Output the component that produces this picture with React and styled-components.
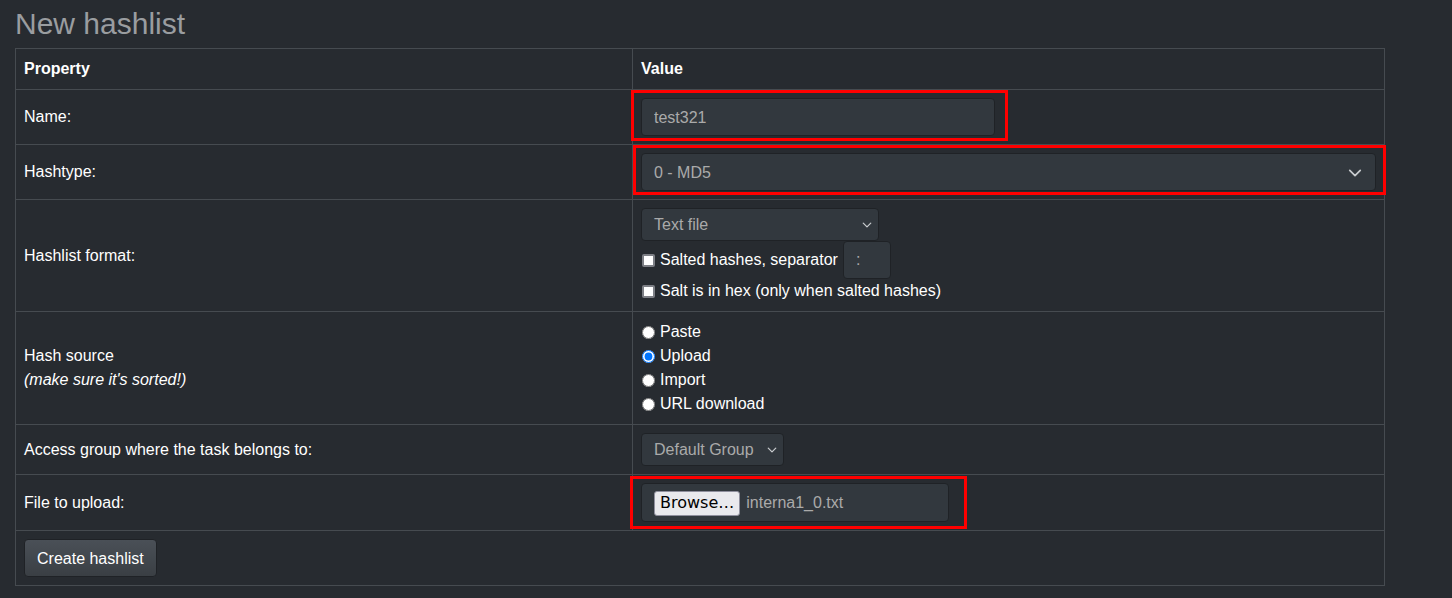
import React from "react";
import styled, { createGlobalStyle } from "styled-components";

// css
const GlobalStyle = createGlobalStyle`
  body {
    margin: 0;
    background: #272b30;
    color: #fff;
    font-family: "Liberation Sans", Arial, sans-serif;
    font-size: 16px;
    line-height: 1.5;
  }
`;

const Page = styled.div`
  padding: 0 15px;
`;

const Title = styled.h3`
  margin: 6px 0;
  font-size: 30px;
  font-weight: 400;
  line-height: 1.2;
  color: #9a9da0;
`;

const Table = styled.table`
  width: 1369px;
  table-layout: fixed;
  border-collapse: collapse;
  border: 1px solid #464b50;
`;

const Col = styled.col`
  width: ${(props) => props.$w};
`;

const Th = styled.th`
  padding: 8px;
  text-align: left;
  font-weight: 700;
  border: 1px solid #464b50;
`;

const Td = styled.td`
  padding: 8px;
  vertical-align: middle;
  border: 1px solid #464b50;
`;

const Highlight = styled.div`
  position: relative;
  display: ${(props) => (props.$block ? "block" : "inline-block")};
  vertical-align: middle;
  &::after {
    content: "";
    position: absolute;
    top: ${(props) => props.$t}px;
    left: ${(props) => props.$l}px;
    right: ${(props) => props.$r}px;
    bottom: ${(props) => props.$b}px;
    border: 3px solid #ff0000;
    pointer-events: none;
  }
`;

const TextInput = styled.input`
  display: block;
  box-sizing: border-box;
  width: ${(props) => props.$w || "100%"};
  height: 38px;
  padding: 7px 12px 5px;
  background: #32383e;
  border: 1px solid #1f2226;
  border-radius: 4px;
  color: #aaa;
  font-family: inherit;
  font-size: 16px;
  outline: none;
`;

const SelectBox = styled.div`
  box-sizing: border-box;
  display: flex;
  align-items: center;
  justify-content: space-between;
  width: ${(props) => props.$w || "100%"};
  height: ${(props) => props.$h || "33px"};
  padding: 1px ${(props) => props.$pr || "6px"} 0 12px;
  background: #32383e;
  border: 1px solid #1f2226;
  border-radius: 4px;
  color: #aaa;
  font-size: 16px;
`;

const Chevron = ({ size }) => (
  <svg width={size} height={size} viewBox="0 0 16 16" fill="none">
    <path d="M2 5l6 6 6-6" stroke="#c8cbce" strokeWidth="2" strokeLinecap="round" strokeLinejoin="round" />
  </svg>
);

const CheckLine = styled.div`
  display: flex;
  align-items: center;
  min-height: 24px;
`;

const Check = styled.input`
  appearance: none;
  box-sizing: border-box;
  width: 13px;
  height: 13px;
  margin: 0 5px 0 1px;
  background: #fff;
  border: 2px solid #7d7f85;
  border-radius: 2px;
`;

const Radio = styled.input`
  width: 13px;
  height: 13px;
  margin: 1px 5px 0 1px;
`;

const SepInput = styled.input`
  box-sizing: border-box;
  width: 48px;
  height: 38px;
  margin-left: 5px;
  padding: 6px 12px;
  background: #32383e;
  border: 1px solid #1f2226;
  border-radius: 4px;
  color: #aaa;
  font-family: inherit;
  font-size: 16px;
  outline: none;
`;

const Hint = styled.span`
  font-style: italic;
`;

const FileBox = styled.div`
  box-sizing: border-box;
  display: flex;
  align-items: center;
  gap: 6px;
  width: 308px;
  height: 39px;
  padding: 1px 12px 0;
  background: #32383e;
  border: 1px solid #1f2226;
  border-radius: 4px;
  color: #aaa;
`;

const BrowseButton = styled.button`
  box-sizing: border-box;
  height: 25px;
  padding: 0 5px;
  background: #e9e9ed;
  border: 1px solid #8f8f9d;
  border-radius: 3px;
  color: #000;
  font-family: "DejaVu Sans", sans-serif;
  font-size: 16px;
  line-height: 1;
`;

const SubmitButton = styled.button`
  box-sizing: border-box;
  height: 38px;
  padding: 1px 12px 0;
  background: linear-gradient(#4a5057, #3a3f44);
  border: 1px solid #1f2226;
  border-radius: 4px;
  color: #fff;
  font-family: inherit;
  font-size: 16px;
`;

const sources = ["Paste", "Upload", "Import", "URL download"];

export default function App() {
  return (
    <Page>
      <GlobalStyle />
      <Title>New hashlist</Title>
      <Table>
        <colgroup>
          <Col $w="617px" />
          <Col $w="752px" />
        </colgroup>
        <thead>
          <tr>
            <Th>Property</Th>
            <Th>Value</Th>
          </tr>
        </thead>
        <tbody>
          <tr>
            <Td>Name:</Td>
            <Td>
              <Highlight $t={-8} $l={-10} $r={-13} $b={-5}>
                <TextInput $w="354px" defaultValue="test321" />
              </Highlight>
            </Td>
          </tr>
          <tr>
            <Td>Hashtype:</Td>
            <Td>
              <Highlight $block $t={-8} $l={-8} $r={-10} $b={-4}>
                <SelectBox $h="38px" $pr="13px">
                  <span>0 - MD5</span>
                  <Chevron size={14} />
                </SelectBox>
              </Highlight>
            </Td>
          </tr>
          <tr>
            <Td>Hashlist format:</Td>
            <Td>
              <SelectBox $w="238px">
                <span>Text file</span>
                <Chevron size={10} />
              </SelectBox>
              <CheckLine>
                <Check type="checkbox" />
                Salted hashes, separator
                <SepInput defaultValue=":" />
              </CheckLine>
              <CheckLine>
                <Check type="checkbox" />
                Salt is in hex (only when salted hashes)
              </CheckLine>
            </Td>
          </tr>
          <tr>
            <Td>
              Hash source
              <br />
              <Hint>(make sure it's sorted!)</Hint>
            </Td>
            <Td>
              {sources.map((s) => (
                <CheckLine key={s}>
                  <Radio type="radio" name="source" defaultChecked={s === "Upload"} />
                  {s}
                </CheckLine>
              ))}
            </Td>
          </tr>
          <tr>
            <Td>Access group where the task belongs to:</Td>
            <Td>
              <SelectBox $w="143px">
                <span>Default Group</span>
                <Chevron size={10} />
              </SelectBox>
            </Td>
          </tr>
          <tr>
            <Td>File to upload:</Td>
            <Td>
              <Highlight $t={-7} $l={-11} $r={-18} $b={-7}>
                <FileBox>
                  <BrowseButton>Browse…</BrowseButton>
                  <span>interna1_0.txt</span>
                </FileBox>
              </Highlight>
            </Td>
          </tr>
          <tr>
            <Td colSpan={2}>
              <SubmitButton>Create hashlist</SubmitButton>
            </Td>
          </tr>
        </tbody>
      </Table>
    </Page>
  );
}
